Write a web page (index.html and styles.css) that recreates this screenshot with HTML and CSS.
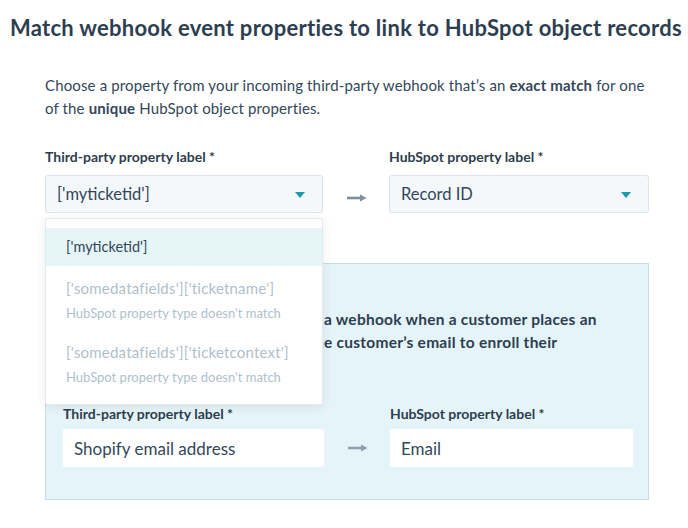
FILE: index.html
```html
<!DOCTYPE html>
<html lang="en">
<head>
<meta charset="utf-8">
<title>Match webhook event properties</title>
<link rel="stylesheet" href="styles.css">
</head>
<body>
<div class="page">
  <h1 class="title">Match webhook event properties to link to HubSpot object records</h1>
  <div class="content">
    <p class="intro"><span>Choose a property from your incoming third-party webhook that’s an <b>exact match</b> for one</span><br><span>of the <b>unique</b> HubSpot object properties.</span></p>

    <div class="mapping top">
      <div class="field">
        <div class="label">Third-party property label *</div>
        <div class="select">
          <span>['myticketid']</span>
          <span class="caret"></span>
        </div>
        <div class="dropdown">
          <div class="option active">['myticketid']</div>
          <div class="option disabled">
            <div class="opt-main">['somedatafields']['ticketname']</div>
            <div class="opt-sub">HubSpot property type doesn't match</div>
          </div>
          <div class="option disabled">
            <div class="opt-main">['somedatafields']['ticketcontext']</div>
            <div class="opt-sub">HubSpot property type doesn't match</div>
          </div>
        </div>
      </div>
      <div class="arrow arrow-top">
        <svg width="20" height="8" viewBox="0 0 20 8"><path d="M0 4 H15" stroke="#7c8f9f" stroke-width="2.6"/><path d="M13 0.5 L19.5 4 L13 7.5 Z" fill="#7c8f9f"/></svg>
      </div>
      <div class="field">
        <div class="label">HubSpot property label *</div>
        <div class="select">
          <span>Record ID</span>
          <span class="caret"></span>
        </div>
      </div>
    </div>

    <div class="example">
      <p class="example-text"><span class="prefix">Say your store sends </span>a webhook when a customer places an<br><span class="prefix">an order; use th</span>e customer’s email to enroll their</p>
      <div class="mapping bottom">
        <div class="field">
          <div class="label tight">Third-party property label *</div>
          <div class="input">Shopify email address</div>
        </div>
        <div class="arrow">
          <svg width="20" height="8" viewBox="0 0 20 8"><path d="M0 4 H15" stroke="#8da0ae" stroke-width="2.6"/><path d="M13 0.5 L19.5 4 L13 7.5 Z" fill="#8da0ae"/></svg>
        </div>
        <div class="field">
          <div class="label tight">HubSpot property label *</div>
          <div class="input">Email</div>
        </div>
      </div>
    </div>
  </div>
</div>
</body>
</html>
```
FILE: styles.css
```css
* { box-sizing: border-box; }
html, body { margin: 0; padding: 0; background: #ffffff; }
body {
  font-family: "Lato", "Noto Sans", sans-serif;
  color: #33475b;
}
.page { padding-top: 14px; }
.title {
  margin: 0 0 0 10px;
  font-size: 22px;
  line-height: 28px;
  font-weight: 700;
  letter-spacing: 0.28px;
  color: #2d3e50;
  white-space: nowrap;
}
.content {
  margin-left: 45px;
  width: 604px;
}
.intro {
  margin: 32px 0 0 0;
  font-size: 15px;
  line-height: 23px;
  letter-spacing: 0.14px;
  color: #33475b;
  white-space: nowrap;
}
.intro b { font-weight: 700; }
.mapping {
  display: grid;
  align-items: end;
}
.mapping.top {
  grid-template-columns: 278px 66px 260px;
  margin-top: 27px;
}
.mapping.bottom {
  grid-template-columns: 261px 66px 243px;
  margin-top: 50px;
}
.field { position: relative; }
.label {
  font-size: 14px;
  line-height: 20px;
  font-weight: 700;
  color: #2d3e50;
  margin-bottom: 8px;
}
.label.tight { margin-bottom: 5px; }
.select {
  height: 38px;
  background: #f5f8fa;
  border: 1px solid #dfe3eb;
  border-radius: 3px;
  display: flex;
  align-items: center;
  justify-content: space-between;
  padding: 0 17px 0 11px;
  font-size: 16.5px;
  color: #33475b;
}
.caret {
  width: 0;
  height: 0;
  border-left: 5.5px solid transparent;
  border-right: 5.5px solid transparent;
  border-top: 6px solid #1e9aad;
  margin-top: 2px;
}
.arrow {
  height: 38px;
  display: flex;
  align-items: center;
  justify-content: center;
  padding-left: 2px;
}
.arrow-top { padding-top: 8px; }
.dropdown {
  position: absolute;
  left: 0;
  top: 71px;
  width: 278px;
  background: #ffffff;
  border: 1px solid #e6eaee;
  border-radius: 3px;
  box-shadow: 0 2px 10px rgba(45, 62, 80, 0.10);
  padding: 9px 0 8px 0;
  z-index: 5;
}
.option {
  padding: 9px 20px;
  font-size: 14.5px;
  line-height: 20px;
}
.option.active {
  background: #e5f5f8;
  color: #33475b;
}
.option.disabled {
  padding: 12px 20px 9px 20px;
  color: #b0bfcd;
}
.option.disabled + .option.disabled { padding-top: 10px; }
.opt-main { font-size: 15px; line-height: 20px; letter-spacing: 0.2px; }
.opt-sub { font-size: 13px; line-height: 20px; margin-top: 5px; }
.example {
  margin-top: 50px;
  background: #e5f4f8;
  border: 1px solid #c3dfe4;
  padding: 44px 17px 32px 17px;
}
.example-text {
  margin: 0;
  font-size: 15.5px;
  line-height: 23px;
  font-weight: 700;
  letter-spacing: 0.25px;
  color: #2d3e50;
  white-space: nowrap;
}
.prefix {
  display: inline-block;
  width: 261px;
  text-align: right;
  vertical-align: top;
  white-space: pre;
}
.input {
  height: 38px;
  background: #ffffff;
  border-radius: 2px;
  display: flex;
  align-items: center;
  padding: 0 11px;
  font-size: 17px;
  color: #33475b;
}
```
